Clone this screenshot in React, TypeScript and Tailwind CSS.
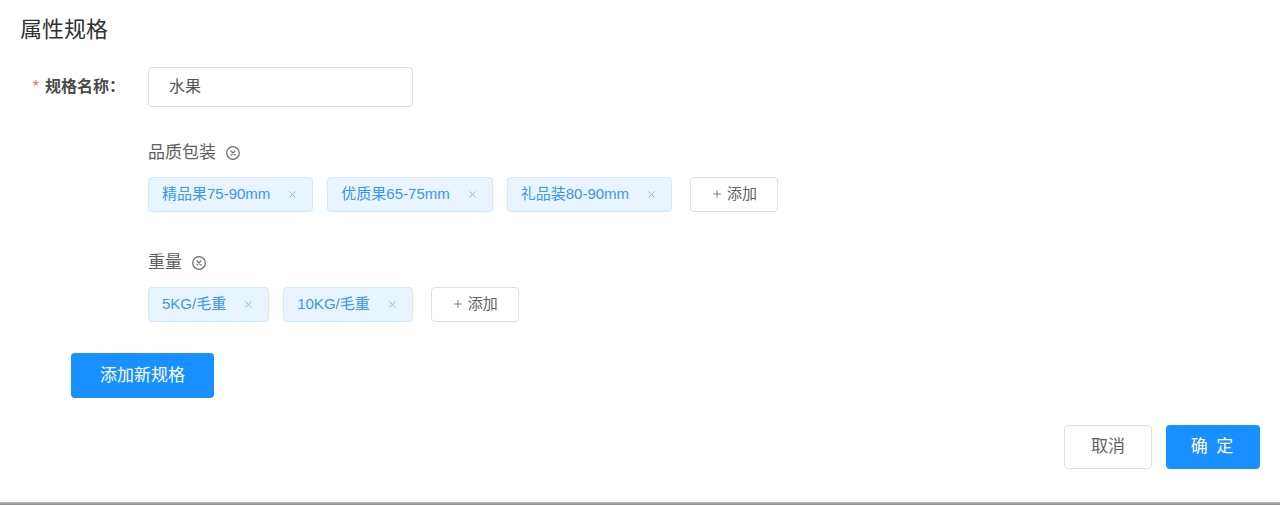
import { Plus, X } from 'lucide-react';

const font = { fontFamily: '"Liberation Sans", "Noto Sans CJK SC", sans-serif' };

interface SpecGroup {
  name: string;
  values: string[];
}

const groups: SpecGroup[] = [
  { name: '品质包装', values: ['精品果75-90mm', '优质果65-75mm', '礼品装80-90mm'] },
  { name: '重量', values: ['5KG/毛重', '10KG/毛重'] },
];

const CircleClose = () => (
  <svg width="16" height="16" viewBox="0 0 16 16" fill="none" className="text-[#6b6b6b]">
    <circle cx="8" cy="8" r="6.3" stroke="currentColor" strokeWidth="1.2" />
    <path d="M6 6 L10 10 M10 6 L6 10" stroke="currentColor" strokeWidth="1.1" strokeLinecap="round" />
  </svg>
);

const Tag = ({ label }: { label: string }) => (
  <div className="flex items-center h-[35px] pl-[13px] pr-[14px] rounded-[4px] bg-[#e8f4ff] border border-[#d1e8ff] text-[15px] text-[#3a95f5]">
    <span>{label}</span>
    <X className="w-[11px] h-[11px] ml-[17px] text-[#7db6f2]" strokeWidth={2} />
  </div>
);

export default function App() {
  return (
    <div className="w-[1280px] h-[505px] bg-[#8c8c8c] flex flex-col" style={font}>
      <div className="h-[502px] bg-white px-5 pt-[17px] flex flex-col">
        <h2 className="text-[22px] leading-[26px] text-[#303133]">属性规格</h2>

        <div className="mt-[24px] flex items-center">
          <label className="w-[105px] text-right text-[16px] font-bold text-[#4a4a4a] whitespace-nowrap">
            <span className="text-[#f56c6c] mr-[6px] font-normal">*</span>规格名称：
          </label>
          <div className="ml-[23px] w-[265px] h-[40px] border border-[#dcdfe6] rounded-[4px] flex items-center px-[20px] text-[16px] text-[#555]">
            水果
          </div>
        </div>

        <div className="pl-[128px]">
          {groups.map((g, i) => (
            <div key={g.name} className={i === 0 ? 'mt-[36px]' : 'mt-[41px]'}>
              <div className="flex items-center gap-[9px] h-[20px] text-[17px] text-[#5f5f5f]">
                <span>{g.name}</span>
                <CircleClose />
              </div>
              <div className="mt-[14px] flex items-center gap-[14px]">
                {g.values.map((v) => (
                  <Tag key={v} label={v} />
                ))}
                <button className="ml-[4px] h-[35px] px-[20px] flex items-center gap-[4px] rounded-[4px] border border-[#dcdfe6] bg-white text-[15px] text-[#606266] -mt-[1px]">
                  <Plus className="w-[12px] h-[12px]" strokeWidth={1.6} />
                  添加
                </button>
              </div>
            </div>
          ))}
        </div>

        <div className="mt-[31px] pl-[51px]">
          <button className="h-[45px] w-[143px] rounded-[4px] bg-[#1890ff] text-white text-[17px]">
            添加新规格
          </button>
        </div>

        <div className="mt-[27px] flex justify-end gap-[14px]">
          <button className="h-[44px] w-[88px] rounded-[4px] border border-[#dcdfe6] bg-white text-[17px] text-[#606266]">
            取消
          </button>
          <button className="h-[44px] w-[94px] rounded-[4px] bg-[#1890ff] text-white text-[17px] tracking-[2px]">
            确 定
          </button>
        </div>
      </div>
      <div className="h-[3px] bg-gradient-to-b from-[#bdbdbd] to-[#8a8a8a]" />
    </div>
  );
}
